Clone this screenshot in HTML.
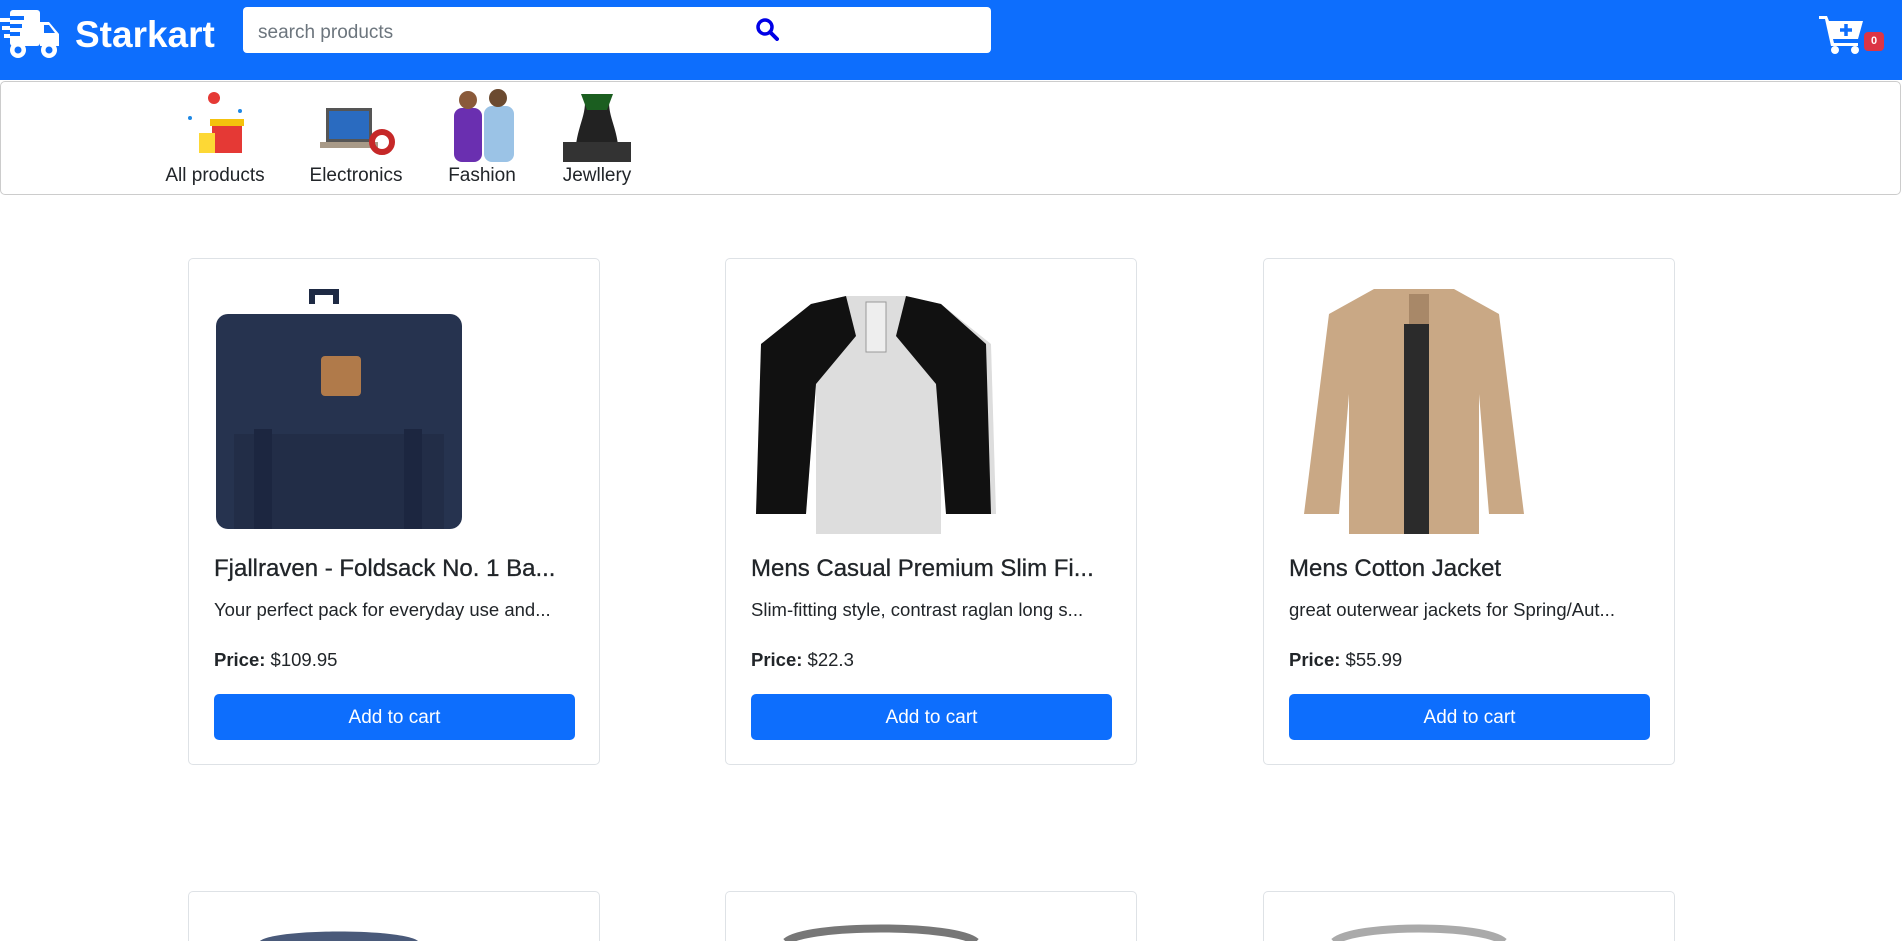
<!DOCTYPE html>
<html><head><meta charset="utf-8"><style>
*{box-sizing:border-box;margin:0;padding:0}
html,body{width:1902px;height:941px;overflow:hidden}
body{position:relative;background:#fff;font-family:"Liberation Sans",sans-serif;color:#212529}
.hdr{position:absolute;left:0;top:0;width:1902px;height:80px;background:#0d6efd}
.logo{position:absolute;left:75px;top:14px;color:#fff;font-weight:bold;font-size:37px}
.search{position:absolute;left:243px;top:7px;width:748px;height:46px;background:#fff;border-radius:4px;font-size:19px;color:#6c757d;padding:15px 15px 0}
.cat{position:absolute;left:0;top:81px;width:1901px;height:114px;border:1px solid #ccc;border-radius:5px}
.ci{position:absolute;top:4px;text-align:center;font-size:19px}
.ci .im{width:80px;height:76px;margin:0 auto 3px}
.card{position:absolute;width:412px;height:507px;border:1px solid #dee2e6;border-radius:5px;overflow:hidden}
.card.r2{height:50px;border-bottom:none;border-radius:5px 5px 0 0}
.card .pic{position:absolute;left:25px;top:25px;width:250px;height:250px}
.t{position:absolute;left:25px;top:296px;font-size:24px;white-space:nowrap;-webkit-text-stroke:0.3px #212529}
.d{position:absolute;left:25px;top:340px;font-size:18.5px;white-space:nowrap}
.p{position:absolute;left:25px;top:390px;font-size:18.5px}
.b{position:absolute;left:25px;top:435px;width:361px;height:46px;background:#0d6efd;color:#fff;border-radius:5px;font-size:19px;text-align:center;line-height:48px}
</style></head><body>
<div class="hdr">
<svg style="position:absolute;left:0;top:9px" width="62" height="50" viewBox="0 0 62 48"><g fill="#fff"><rect x="10" y="0" width="30" height="36" rx="3"/><path d="M40 12h9l10 12v12H40z"/><rect x="0" y="8" width="22" height="4"/><rect x="2" y="16" width="20" height="4"/><rect x="4" y="24" width="18" height="4"/><circle cx="18" cy="40" r="8"/><circle cx="49" cy="40" r="8"/></g><rect x="10" y="6" width="14" height="4" fill="#0d6efd"/><rect x="10" y="14" width="12" height="4" fill="#0d6efd"/><rect x="10" y="22" width="10" height="4" fill="#0d6efd"/><circle cx="18" cy="40" r="3.5" fill="#0d6efd"/><circle cx="49" cy="40" r="3.5" fill="#0d6efd"/><path d="M44 15h5l6 8h-11z" fill="#0d6efd"/></svg>
<div class="logo">Starkart</div>
<div class="search">search products</div>
<svg style="position:absolute;left:755px;top:17px" width="24" height="24" viewBox="0 0 24 24"><circle cx="10" cy="10" r="7" fill="none" stroke="#0000e6" stroke-width="3.5"/><path d="M15 15l7 7" stroke="#0000e6" stroke-width="4" stroke-linecap="round"/></svg>
<svg style="position:absolute;left:1819px;top:14px" width="46" height="40" viewBox="0 0 46 40"><g fill="#fff"><path d="M0 2h8l2 5h34l-5 18H14l1 4h24v3H12L6 5H0z"/><circle cx="16" cy="36" r="4"/><circle cx="36" cy="36" r="4"/></g><path d="M27 10v12M21 16h12" stroke="#0d6efd" stroke-width="3.5"/></svg>
<div style="position:absolute;left:1864px;top:32px;width:20px;height:19px;background:#dc3545;border-radius:4px;color:#fff;font-size:11px;font-weight:bold;text-align:center;line-height:19px">0</div>
</div>
<div class="cat">
<div class="ci" style="left:158px;width:112px"><div class="im"><svg width="80" height="76"><rect x="37" y="37" width="30" height="30" fill="#e53935"/><rect x="35" y="33" width="34" height="7" fill="#f4c20d"/><rect x="24" y="47" width="16" height="20" fill="#fdd835"/><circle cx="39" cy="12" r="6" fill="#e53935"/><circle cx="15" cy="32" r="2" fill="#1e88e5"/><circle cx="65" cy="25" r="2" fill="#1e88e5"/></svg></div>All products</div>
<div class="ci" style="left:300px;width:110px"><div class="im"><svg width="80" height="76"><rect x="10" y="22" width="46" height="34" fill="#555"/><rect x="13" y="25" width="40" height="28" fill="#2a6bc0"/><rect x="4" y="56" width="58" height="6" fill="#a89a88"/><circle cx="66" cy="56" r="10" fill="none" stroke="#c62828" stroke-width="6"/></svg></div>Electronics</div>
<div class="ci" style="left:440px;width:82px"><div class="im"><svg width="80" height="76"><rect x="12" y="22" width="28" height="54" rx="8" fill="#6a2fb0"/><rect x="42" y="20" width="30" height="56" rx="8" fill="#9bc3e6"/><circle cx="26" cy="14" r="9" fill="#8a5a3a"/><circle cx="56" cy="12" r="9" fill="#6b4a30"/></svg></div>Fashion</div>
<div class="ci" style="left:553px;width:86px"><div class="im"><svg width="80" height="76"><path d="M18 74c0-30 10-40 10-58h24c0 18 10 28 10 58z" fill="#222"/><path d="M24 8h32l-6 16H30z" fill="#1b5e20"/><rect x="6" y="56" width="68" height="20" fill="#333"/></svg></div>Jewllery</div>
</div>

<div class="card" style="left:188px;top:258px"><div class="pic"><svg width="250" height="250"><path d="M95 5h30v15h-6v-9h-18v9h-6z" fill="#1e2a44"/><rect x="2" y="30" width="246" height="215" rx="12" fill="#26334f"/><rect x="20" y="150" width="210" height="95" fill="#222d47"/><rect x="107" y="72" width="40" height="40" rx="4" fill="#b07a4a"/><rect x="40" y="145" width="18" height="100" fill="#1c2640"/><rect x="190" y="145" width="18" height="100" fill="#1c2640"/></svg></div>
<div class="t">Fjallraven - Foldsack No. 1 Ba...</div><div class="d">Your perfect pack for everyday use and...</div><div class="p"><b>Price:</b> $109.95</div><div class="b">Add to cart</div></div>
<div class="card" style="left:725px;top:258px"><div class="pic"><svg width="250" height="250"><path d="M60 20l35-8h60l35 8 50 40 5 170h-45l-10-130v150l-25 8H90l-25-8V100l-10 130H5l5-170z" fill="#ddd"/><path d="M60 20l35-8 10 40-40 48-10 130H5l5-170z" fill="#111"/><path d="M190 20l-35-8-10 40 40 48 10 130h45l-5-170z" fill="#111"/><rect x="115" y="18" width="20" height="50" fill="#eee" stroke="#999"/></svg></div>
<div class="t">Mens Casual Premium Slim Fi...</div><div class="d">Slim-fitting style, contrast raglan long s...</div><div class="p"><b>Price:</b> $22.3</div><div class="b">Add to cart</div></div>
<div class="card" style="left:1263px;top:258px"><div class="pic"><svg width="250" height="250"><path d="M85 5h80l45 25 25 200h-35l-10-120v140H60V110L50 230H15L40 30z" fill="#c9a885"/><path d="M115 40h25v210h-25z" fill="#2b2b2b"/><rect x="120" y="10" width="20" height="30" fill="#a88868"/></svg></div>
<div class="t">Mens Cotton Jacket</div><div class="d">great outerwear jackets for Spring/Aut...</div><div class="p"><b>Price:</b> $55.99</div><div class="b">Add to cart</div></div>

<div class="card r2" style="left:188px;top:891px"><svg style="position:absolute;left:60px;top:30px" width="180" height="20"><path d="M10 20c10-14 150-14 160 0z" fill="#4a5a7a"/></svg></div>
<div class="card r2" style="left:725px;top:891px"><svg style="position:absolute;left:55px;top:28px" width="200" height="22"><path d="M5 22c20-18 170-18 190 0" fill="none" stroke="#777" stroke-width="8"/></svg></div>
<div class="card r2" style="left:1263px;top:891px"><svg style="position:absolute;left:65px;top:28px" width="180" height="22"><path d="M5 22c20-18 150-18 170 0" fill="none" stroke="#aaa" stroke-width="8"/></svg></div>
</body></html>
